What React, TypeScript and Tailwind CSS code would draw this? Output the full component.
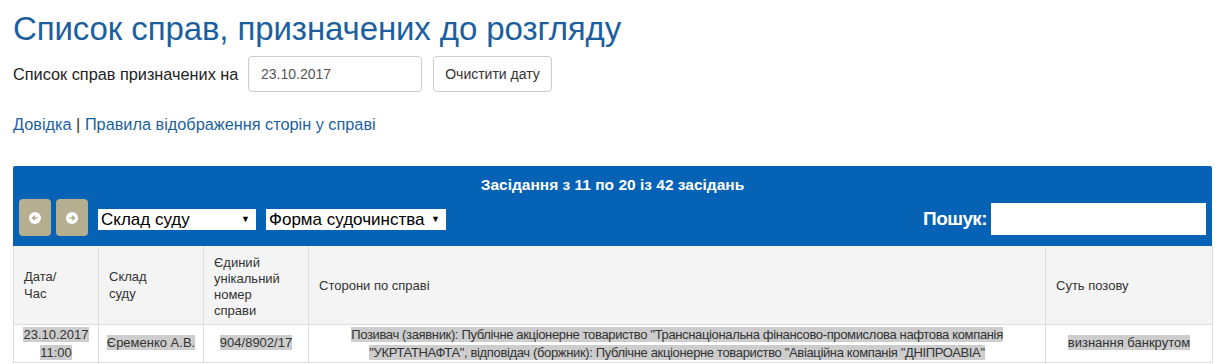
import React from 'react';

const font = { fontFamily: '"Liberation Sans", Arial, sans-serif' };

const ArrowButton = ({ dir }: { dir: 'left' | 'right' }) => (
  <button className="w-[32px] h-[37px] rounded-[4px] bg-[#b6af8f] flex items-center justify-center">
    <svg width="12" height="12" viewBox="0 0 12 12">
      <circle cx="6" cy="6" r="6" fill="#fff" />
      {dir === 'left' ? (
        <path d="M8.5 6H4M5.8 3.8 3.6 6l2.2 2.2" stroke="#b6af8f" strokeWidth="1.6" fill="none" />
      ) : (
        <path d="M3.5 6H8M6.2 3.8 8.4 6 6.2 8.2" stroke="#b6af8f" strokeWidth="1.6" fill="none" />
      )}
    </svg>
  </button>
);

const FakeSelect = ({ label, w }: { label: string; w: string }) => (
  <div className={`${w} h-[21px] bg-white flex items-center justify-between pl-[3px] pr-[6px] text-[17px] text-black`}>
    <span className="leading-none">{label}</span>
    <span className="text-[9px] leading-none">▼</span>
  </div>
);

const hl = "bg-[#cdcdcd]";

export default function App() {
  return (
    <div className="bg-white w-[1225px] h-[364px] overflow-hidden px-[13px] text-[#333]" style={font}>
      {/* Title */}
      <h1 className="text-[33px] leading-none text-[#1c5f9f] pt-[12px] tracking-[-0.1px]">
        Список справ, призначених до розгляду
      </h1>

      {/* Date filter */}
      <div className="flex items-center mt-[11px]">
        <span className="text-[16.3px] text-[#222] w-[235px]">Список справ призначених на</span>
        <div className="w-[174px] h-[36px] border border-[#ccc] rounded-[4px] flex items-center px-[12px] text-[14px] text-[#555]">
          23.10.2017
        </div>
        <button className="ml-[11px] w-[119px] h-[36px] border border-[#ccc] rounded-[4px] text-[14px] text-[#333] bg-white">
          Очистити дату
        </button>
      </div>

      {/* Links */}
      <div className="mt-[20px] text-[16.3px] text-[#1c5f9f]">
        <span>Довідка</span> <span className="text-[#333]">|</span> <span>Правила відображення сторін у справі</span>
      </div>

      {/* Table */}
      <div className="mt-[30px] w-[1199px]">
        <div className="bg-[#0562b4] h-[80px] rounded-t-[2px] px-[6px] flex flex-col">
          <div className="text-center text-white font-bold text-[15.5px] pt-[10px] leading-[18px]">
            Засідання з 11 по 20 із 42 засідань
          </div>
          <div className="flex items-center mt-[5px]">
            <div className="flex gap-[5px]">
              <ArrowButton dir="left" />
              <ArrowButton dir="right" />
            </div>
            <div className="flex items-center gap-[10px] ml-[10px] mt-[4px]">
              <FakeSelect label="Склад суду" w="w-[158px]" />
              <FakeSelect label="Форма судочинства" w="w-[180px]" />
            </div>
            <div className="ml-auto flex items-center mt-[2px]">
              <span className="text-white font-bold text-[19px] tracking-[-0.6px] mr-[4px]">Пошук:</span>
              <div className="w-[215px] h-[32px] bg-white" />
            </div>
          </div>
        </div>

        <table className="w-full border-collapse text-[13px] leading-[17px] table-fixed">
          <colgroup>
            <col className="w-[85px]" />
            <col className="w-[105px]" />
            <col className="w-[105px]" />
            <col className="w-[737px]" />
            <col className="w-[167px]" />
          </colgroup>
          <thead>
            <tr className="bg-[#f4f4f4] h-[78px] text-left text-[#333]">
              <th className="font-normal border border-[#ddd] border-t-0 px-[10px] align-middle">Дата/<br />Час</th>
              <th className="font-normal border border-[#ddd] border-t-0 px-[10px] align-middle">Склад<br />суду</th>
              <th className="font-normal border border-[#ddd] border-t-0 px-[10px] pt-[4px] align-middle leading-[16px]">Єдиний<br />унікальний<br />номер<br />справи</th>
              <th className="font-normal border border-[#ddd] border-t-0 px-[10px] align-middle">Сторони по справі</th>
              <th className="font-normal border border-[#ddd] border-t-0 px-[10px] align-middle">Суть позову</th>
            </tr>
          </thead>
          <tbody>
            <tr className="text-center text-[#333] leading-[18px]">
              <td className="border border-[#ddd] px-[4px] pt-[1px] align-top"><span className={hl}>23.10.2017</span><br /><span className={hl}>11:00</span></td>
              <td className="border border-[#ddd] px-[4px] align-middle"><span className={hl}>Єременко А.В.</span></td>
              <td className="border border-[#ddd] px-[4px] align-middle"><span className={hl}>904/8902/17</span></td>
              <td className="border border-[#ddd] px-[40px] pt-[1px] align-top tracking-[-0.35px]">
                <span className={hl}>Позивач (заявник): Публічне акціонерне товариство "Транснаціональна фінансово-промислова нафтова компанія "УКРТАТНАФТА", відповідач (боржник): Публічне акціонерне товариство "Авіаційна компанія "ДНІПРОАВІА"</span>
              </td>
              <td className="border border-[#ddd] px-[4px] align-middle"><span className={hl}>визнання банкрутом</span></td>
            </tr>
          </tbody>
        </table>
      </div>
    </div>
  );
}
